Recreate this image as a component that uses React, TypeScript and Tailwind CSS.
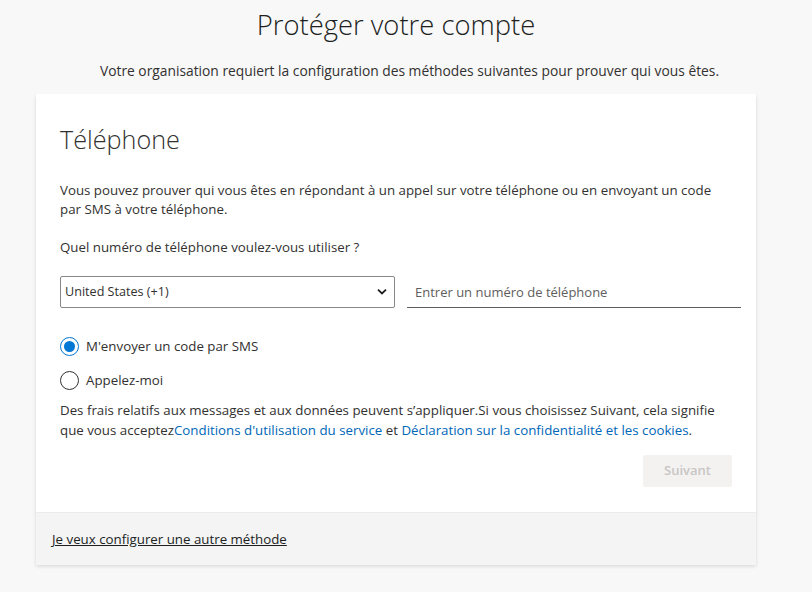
import { useState } from "react";

const font = { fontFamily: '"Open Sans", "Noto Sans", sans-serif' };

export default function App() {
  const [method, setMethod] = useState<"sms" | "call">("sms");

  return (
    <div className="min-h-[592px] bg-[#f8f8f8] text-[#323130]" style={font}>
      <div className="flex flex-col items-center pt-[6px]">
        <h1 className="mr-[20px] text-[27.4px] font-light leading-[38px] text-[#201f1e]">Protéger votre compte</h1>
        <p className="ml-[7px] mt-[18px] text-[13.8px] leading-[18px]">
          Votre organisation requiert la configuration des méthodes suivantes pour prouver qui vous êtes.
        </p>
      </div>

      <div className="mx-[36px] mt-[14px] w-[720px] bg-white shadow-[0_1.6px_3.6px_rgba(0,0,0,0.13),0_0.3px_0.9px_rgba(0,0,0,0.11)]">
        <div className="px-[24px] pt-[27px] pb-[25px] text-[13.3px]">
          <h2 className="text-[25.2px] font-light leading-[36px] text-[#323130]">Téléphone</h2>

          <p className="mt-[24px] leading-[19px]">
            Vous pouvez prouver qui vous êtes en répondant à un appel sur votre téléphone ou en envoyant un code
            par SMS à votre téléphone.
          </p>

          <p className="mt-[19px] leading-[19px]">Quel numéro de téléphone voulez-vous utiliser ?</p>

          <div className="mr-[-9px] mt-[19px] flex items-end gap-[12px]">
            <div className="relative w-[335px] shrink-0">
              <select
                className="h-[32px] w-full appearance-none rounded-[2px] border border-[#8a8886] bg-white pl-[4px] pr-[28px] text-[12.6px] text-[#323130] outline-none"
                style={font}
                defaultValue="US"
              >
                <option value="US">United States (+1)</option>
                <option value="FR">France (+33)</option>
              </select>
              <svg
                className="pointer-events-none absolute right-[8px] top-1/2 -translate-y-1/2"
                width="10"
                height="7"
                viewBox="0 0 10 7"
              >
                <path d="M1 1.2 L5 5 L9 1.2" fill="none" stroke="#201f1e" strokeWidth="1.8" />
              </svg>
            </div>
            <input
              className="h-[32px] w-[334px] shrink-0 border-b border-[#605e5c] bg-transparent px-[8px] text-[13px] outline-none placeholder:text-[#605e5c]"
              style={font}
              placeholder="Entrer un numéro de téléphone"
            />
          </div>

          <div className="mt-[28px] flex flex-col gap-[14px]">
            <Radio label="M'envoyer un code par SMS" checked={method === "sms"} onClick={() => setMethod("sms")} />
            <Radio label="Appelez-moi" checked={method === "call"} onClick={() => setMethod("call")} />
          </div>

          <p className="mt-[10px] leading-[20px]">
            Des frais relatifs aux messages et aux données peuvent s’appliquer.Si vous choisissez Suivant, cela signifie
            que vous acceptez
            <a href="#" className="text-[#0067b8]">Conditions d'utilisation du service</a> et{" "}
            <a href="#" className="text-[#0067b8]">Déclaration sur la confidentialité et les cookies</a>.
          </p>

          <div className="mt-[15px] flex justify-end">
            <button
              disabled
              className="h-[32px] w-[89px] rounded-[2px] bg-[#f3f2f1] text-[13px] font-semibold text-[#c8c6c4]"
              style={font}
            >
              Suivant
            </button>
          </div>
        </div>

        <div className="border-t border-[#edebe9] bg-[#f4f4f4] px-[16px] pt-[17px] pb-[17px] text-[13.3px] leading-[18px]">
          <a href="#" className="text-[#201f1e] underline">
            Je veux configurer une autre méthode
          </a>
        </div>
      </div>
    </div>
  );
}

function Radio({ label, checked, onClick }: { label: string; checked: boolean; onClick: () => void }) {
  return (
    <button type="button" onClick={onClick} className="flex items-center gap-[7px] text-left" style={font}>
      <span
        className={
          checked
            ? "flex h-[19px] w-[19px] items-center justify-center rounded-full border border-[#0078d4]"
            : "flex h-[19px] w-[19px] items-center justify-center rounded-full border border-[#323130]"
        }
      >
        {checked && <span className="h-[11px] w-[11px] rounded-full bg-[#0078d4]" />}
      </span>
      <span className="text-[13.3px] leading-[20px] text-[#323130]">{label}</span>
    </button>
  );
}
